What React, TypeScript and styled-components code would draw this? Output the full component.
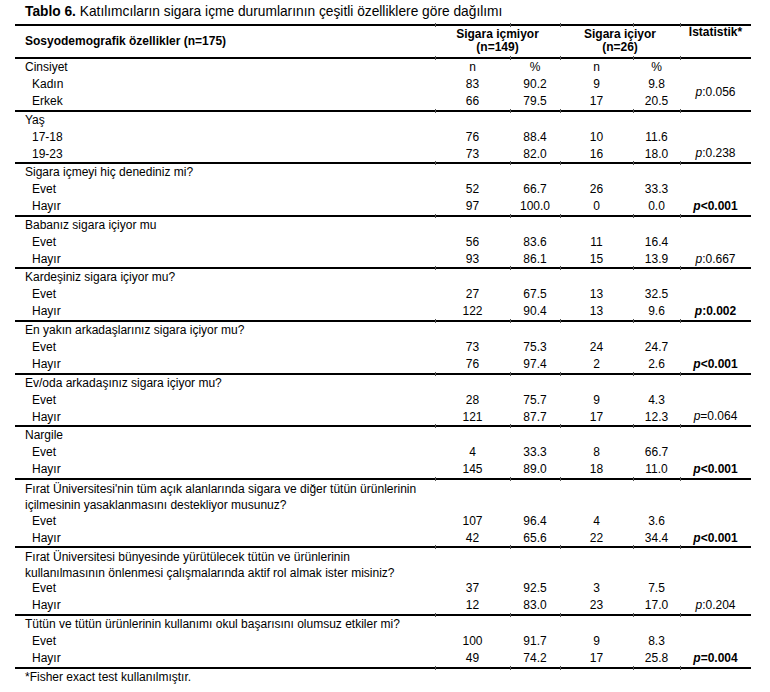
import React from "react";
import styled, { createGlobalStyle, css } from "styled-components";

const COLS = "420px 75px 50px 73px 47px 71px";

const GlobalStyle = createGlobalStyle`
  body {
    margin: 0;
    background: #fff;
    color: #000;
    font-family: "Liberation Sans", Arial, sans-serif;
    font-size: 12px;
  }
`;

interface Stat {
  readonly text: string;
  readonly bold?: boolean;
}

interface GroupData {
  readonly title: React.ReactNode;
  readonly rows: [string, string, string, string, string][];
  readonly stat: Stat;
  readonly top?: number;
  readonly heads?: boolean;
  readonly midStat?: boolean;
}

const groups: GroupData[] = [
  {
    title: "Cinsiyet",
    heads: true,
    midStat: true,
    rows: [["Kadın", "83", "90.2", "9", "9.8"], ["Erkek", "66", "79.5", "17", "20.5"]],
    stat: { text: ":0.056" },
  },
  {
    title: "Yaş",
    rows: [["17-18", "76", "88.4", "10", "11.6"], ["19-23", "73", "82.0", "16", "18.0"]],
    stat: { text: ":0.238" },
  },
  {
    title: "Sigara içmeyi hiç denediniz mi?",
    rows: [["Evet", "52", "66.7", "26", "33.3"], ["Hayır", "97", "100.0", "0", "0.0"]],
    stat: { text: "<0.001", bold: true },
  },
  {
    title: "Babanız sigara içiyor mu",
    rows: [["Evet", "56", "83.6", "11", "16.4"], ["Hayır", "93", "86.1", "15", "13.9"]],
    stat: { text: ":0.667" },
  },
  {
    title: "Kardeşiniz sigara içiyor mu?",
    rows: [["Evet", "27", "67.5", "13", "32.5"], ["Hayır", "122", "90.4", "13", "9.6"]],
    stat: { text: ":0.002", bold: true },
  },
  {
    title: "En yakın arkadaşlarınız sigara içiyor mu?",
    rows: [["Evet", "73", "75.3", "24", "24.7"], ["Hayır", "76", "97.4", "2", "2.6"]],
    stat: { text: "<0.001", bold: true },
  },
  {
    title: "Ev/oda arkadaşınız sigara içiyor mu?",
    rows: [["Evet", "28", "75.7", "9", "4.3"], ["Hayır", "121", "87.7", "17", "12.3"]],
    stat: { text: "=0.064" },
  },
  {
    title: "Nargile",
    rows: [["Evet", "4", "33.3", "8", "66.7"], ["Hayır", "145", "89.0", "18", "11.0"]],
    stat: { text: "<0.001", bold: true },
  },
  {
    title: <>Fırat Üniversitesi'nin tüm açık alanlarında sigara ve diğer tütün ürünlerinin<br />içilmesinin yasaklanmasını destekliyor musunuz?</>,
    top: 33,
    rows: [["Evet", "107", "96.4", "4", "3.6"], ["Hayır", "42", "65.6", "22", "34.4"]],
    stat: { text: "<0.001", bold: true },
  },
  {
    title: <>Fırat Üniversitesi bünyesinde yürütülecek tütün ve ürünlerinin<br />kullanılmasının önlenmesi çalışmalarında aktif rol almak ister misiniz?</>,
    top: 32,
    rows: [["Evet", "37", "92.5", "3", "7.5"], ["Hayır", "12", "83.0", "23", "17.0"]],
    stat: { text: ":0.204" },
  },
  {
    title: "Tütün ve tütün ürünlerinin kullanımı okul başarısını olumsuz etkiler mi?",
    rows: [["Evet", "100", "91.7", "9", "8.3"], ["Hayır", "49", "74.2", "17", "25.8"]],
    stat: { text: "=0.004", bold: true },
  },
];

function App() {
  return <Page>
    <GlobalStyle />
    <Title><b>Tablo 6.</b> Katılımcıların sigara içme durumlarının çeşitli özelliklere göre dağılımı</Title>
    <Rule />
    <Header>
      <HeadLabel>Sosyodemografik özellikler (n=175)</HeadLabel>
      <HeadGroup>Sigara içmiyor<br />(n=149)</HeadGroup>
      <HeadGroup>Sigara içiyor<br />(n=26)</HeadGroup>
      <HeadStat>İstatistik*</HeadStat>
    </Header>
    <Rule />
    {groups.map((g, idx) => <Group key={idx} group={g} />)}
    <Footnote>*Fisher exact test kullanılmıştır.</Footnote>
  </Page>;
}

interface GroupProps {
  readonly group: GroupData;
}
function Group({ group }: GroupProps) {
  const top = group.top ?? 17;
  const tall = top > 17;
  return <>
    <GroupGrid $top={top}>
      <GroupLabel $tall={tall}>{group.title}</GroupLabel>
      {group.heads && ["n", "%", "n", "%"].map((h, i) => <Num key={i} $row="1" $col={i + 2}>{h}</Num>)}
      {group.rows.map((row, r) => row.map((cell, i) => i === 0
        ? <SubLabel key={cell} $row={String(r + 2)}>{cell}</SubLabel>
        : <Num key={cell + i} $row={String(r + 2)} $col={i + 1}>{cell}</Num>))}
      <StatCell $bold={!!group.stat.bold} $row={group.midStat ? "2 / 4" : "3"}>
        <i>p</i>{group.stat.text}
      </StatCell>
    </GroupGrid>
    <Rule />
  </>;
}

function Rule() {
  return <RuleRow>
    {[0, 1, 2, 3, 4, 5].map((i) => <RuleSegment key={i} $tick={i > 0} />)}
  </RuleRow>;
}

const Page = styled.div`
  width: 736px;
  padding-left: 15px;
`;

const Title = styled.div`
  padding: 3px 0 0 10px;
  height: 21px;
  font-size: 13.75px;
  line-height: 17px;
`;

const RuleRow = styled.div`
  display: grid;
  grid-template-columns: ${COLS};
  height: 2px;
`;

const RuleSegment = styled.div<{ $tick: boolean }>`
  position: relative;
  background: #000;
  ${({ $tick }) => $tick && css`
    &::before {
      content: "";
      position: absolute;
      left: 0;
      top: -1px;
      width: 1px;
      height: 4px;
      background: #555;
    }
  `}
`;

const Header = styled.div`
  display: grid;
  grid-template-columns: 420px 125px 120px 71px;
  height: 31px;
  font-weight: bold;
  line-height: 13px;
`;

const HeadLabel = styled.div`
  align-self: center;
  padding-left: 10px;
`;

const HeadGroup = styled.div`
  padding-top: 2px;
  text-align: center;
`;

const HeadStat = styled.div`
  text-align: center;
`;

const GroupGrid = styled.div<{ $top: number }>`
  display: grid;
  grid-template-columns: ${COLS};
  grid-template-rows: ${({ $top }) => $top}px 17px 16.6px;
  line-height: 17px;
`;

const GroupLabel = styled.div<{ $tall: boolean }>`
  grid-column: 1 / 6;
  grid-row: 1;
  padding-left: 10px;
  white-space: nowrap;
  ${({ $tall }) => $tall && css`
    line-height: 16px;
    padding-top: 1px;
  `}
`;

const SubLabel = styled.div<{ $row: string }>`
  grid-column: 1;
  grid-row: ${({ $row }) => $row};
  padding-left: 17px;
`;

const Num = styled.div<{ $row: string; $col: number }>`
  grid-column: ${({ $col }) => $col};
  grid-row: ${({ $row }) => $row};
  text-align: center;
`;

const StatCell = styled.div<{ $bold: boolean; $row: string }>`
  grid-column: 6;
  grid-row: ${({ $row }) => $row};
  align-self: center;
  text-align: center;
  font-weight: ${({ $bold }) => $bold ? "bold" : "normal"};
`;

const Footnote = styled.div`
  padding-left: 10px;
  line-height: 17px;
`;

export default App;
